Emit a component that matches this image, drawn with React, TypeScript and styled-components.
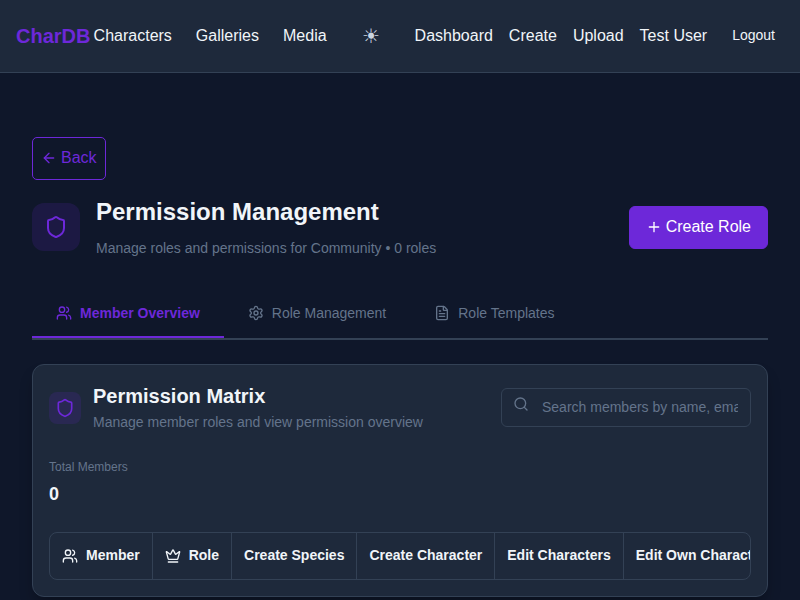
import React from "react";
import styled, { createGlobalStyle, css } from "styled-components";
import { ArrowLeft, Crown, FileText, Plus, Search, Settings, Shield, Users } from "lucide-react";

const color = {
  background: "#0f172a",
  surface: "#1e293b",
  border: "#334155",
  text: "#f1f5f9",
  secondary: "#cbd5e1",
  muted: "#64748b",
  primary: "#6d28d9",
};

const GlobalStyle = createGlobalStyle`
  * { box-sizing: border-box; margin: 0; padding: 0; }
  html, body { height: 600px; overflow: hidden; }
  body {
    background: ${color.background};
    color: ${color.text};
    font-family: "Liberation Sans", Arial, sans-serif;
    font-size: 16px;
    line-height: 1.6;
  }
  button, input { font-family: inherit; }
  svg { flex-shrink: 0; }
`;

const Header = styled.header`
  height: 73px;
  padding: 0 16px;
  display: flex;
  align-items: center;
  justify-content: space-between;
  background: ${color.surface};
  border-bottom: 1px solid ${color.border};
`;

const Logo = styled.a`
  color: ${color.primary};
  font-size: 20px;
  font-weight: 700;
`;

const Nav = styled.nav`
  display: flex;
  align-items: center;
  gap: 24px;
  white-space: nowrap;
`;

const UserNav = styled.div`
  display: flex;
  align-items: center;
  gap: 16px;
`;

const NavLink = styled.a`
  color: ${color.text};
`;

const ThemeToggle = styled.button`
  width: 40px;
  height: 40px;
  border: 0;
  background: none;
  color: ${color.secondary};
  font-size: 20px;
`;

const LogoutButton = styled.button`
  padding: 7px 8px 9px;
  border: 1px solid transparent;
  background: none;
  color: ${color.text};
  font-size: 14px;
`;

const Page = styled.main`
  padding: 64px 32px 0;
`;

const Button = styled.button<{ $filled?: boolean }>`
  display: inline-flex;
  align-items: center;
  justify-content: center;
  gap: 4px;
  height: 43px;
  padding: ${(p) => (p.$filled ? "0 16px" : "0 8px 1px")};
  border: 1px solid ${color.primary};
  border-radius: ${(p) => (p.$filled ? 6 : 5)}px;
  background: ${(p) => (p.$filled ? color.primary : "transparent")};
  color: ${(p) => (p.$filled ? "#fff" : color.primary)};
  font-size: 16px;
  line-height: 24px;
  white-space: nowrap;
`;

const BackRow = styled.div`
  display: flex;
  height: 43px;
`;

const TitleRow = styled.div`
  display: flex;
  align-items: center;
  justify-content: space-between;
  margin-top: 12px;
  height: 70px;
`;

const TitleGroup = styled.div<{ $gap: number }>`
  display: flex;
  align-items: center;
  gap: ${(p) => p.$gap}px;
`;

const TitleText = styled.div<{ $bottom: number }>`
  padding-bottom: ${(p) => p.$bottom}px;
`;

const IconBadge = styled.div<{ $size: number; $radius: number }>`
  width: ${(p) => p.$size}px;
  height: ${(p) => p.$size}px;
  display: flex;
  align-items: center;
  justify-content: center;
  border-radius: ${(p) => p.$radius}px;
  background: rgba(109, 40, 217, 0.15);
  color: ${color.primary};
`;

const PageTitle = styled.h1`
  font-size: 24px;
  line-height: 38px;
  margin-bottom: 6px;
`;

const Subtitle = styled.p`
  color: ${color.muted};
  font-size: 14px;
  line-height: 22px;
`;

const Tabs = styled.div`
  display: flex;
  margin-top: 26px;
  height: 52px;
  border-bottom: 2px solid ${color.border};
`;

const Tab = styled.button<{ $active?: boolean }>`
  display: flex;
  align-items: center;
  gap: 8px;
  height: 50px;
  padding: 2px 24px 0;
  border: 0;
  border-bottom: 2px solid transparent;
  background: none;
  color: ${color.muted};
  font-size: 14px;
  ${(p) =>
    p.$active &&
    css`
      color: ${color.primary};
      border-bottom-color: ${color.primary};
      font-weight: 700;
    `}
`;

const Card = styled.section`
  margin-top: 24px;
  height: 233px;
  padding: 16px;
  border: 1px solid ${color.border};
  border-radius: 12px;
  background: ${color.surface};
  box-shadow: 0 10px 15px -3px rgba(0, 0, 0, 0.3);
`;

const CardHeader = styled.div`
  display: flex;
  align-items: center;
  justify-content: space-between;
  height: 54px;
`;

const CardTitle = styled.h2`
  font-size: 20px;
  line-height: 32px;
  margin-bottom: -1px;
`;

const SearchBox = styled.label`
  display: flex;
  width: 250px;
  height: 39px;
  margin-bottom: 1px;
  padding: 0 12px 0 11px;
  gap: 13px;
  border: 1px solid ${color.border};
  border-radius: 6px;
  color: ${color.muted};

  svg { margin-top: 7px; }
`;

const SearchInput = styled.input`
  flex: 1;
  min-width: 0;
  padding-bottom: 2px;
  border: 0;
  outline: 0;
  background: none;
  color: ${color.text};
  font-size: 14px;
  &::placeholder { color: ${color.muted}; opacity: 1; }
`;

const Stat = styled.div`
  margin-top: 22px;
`;

const StatLabel = styled.div`
  color: ${color.muted};
  font-size: 12px;
  line-height: 20px;
`;

const StatValue = styled.div`
  margin-top: 3px;
  font-size: 18px;
  font-weight: 700;
  line-height: 29px;
`;

const Matrix = styled.div`
  display: flex;
  margin-top: 23px;
  height: 48px;
  overflow: hidden;
  border: 1px solid ${color.border};
  border-radius: 8px;
`;

const HeadCell = styled.div`
  display: flex;
  align-items: center;
  flex-shrink: 0;
  gap: 8px;
  padding: 0 12px;
  border-right: 1px solid ${color.border};
  font-size: 14px;
  font-weight: 700;
  white-space: nowrap;
`;

const HeadLabel = styled.span`
  padding-bottom: 2px;
`;

const columns = [
  { name: "Member", Icon: Users },
  { name: "Role", Icon: Crown },
  { name: "Create Species" },
  { name: "Create Character" },
  { name: "Edit Characters" },
  { name: "Edit Own Characters" },
];

export default function App() {
  return (
    <>
      <GlobalStyle />
      <Header>
        <Logo>CharDB</Logo>
        <Nav>
          <NavLink>Characters</NavLink>
          <NavLink>Galleries</NavLink>
          <NavLink>Media</NavLink>
          <ThemeToggle>☀</ThemeToggle>
          <UserNav>
            <NavLink>Dashboard</NavLink>
            <NavLink>Create</NavLink>
            <NavLink>Upload</NavLink>
            <NavLink>Test User</NavLink>
            <LogoutButton>Logout</LogoutButton>
          </UserNav>
        </Nav>
      </Header>
      <Page>
        <BackRow>
          <Button><ArrowLeft size={16} />Back</Button>
        </BackRow>
        <TitleRow>
          <TitleGroup $gap={16}>
            <IconBadge $size={48} $radius={12}><Shield size={24} /></IconBadge>
            <TitleText $bottom={2}>
              <PageTitle>Permission Management</PageTitle>
              <Subtitle>Manage roles and permissions for Community • 0 roles</Subtitle>
            </TitleText>
          </TitleGroup>
          <Button $filled><Plus size={16} />Create Role</Button>
        </TitleRow>
        <Tabs>
          <Tab $active><Users size={16} />Member Overview</Tab>
          <Tab><Settings size={16} />Role Management</Tab>
          <Tab><FileText size={16} />Role Templates</Tab>
        </Tabs>
        <Card>
          <CardHeader>
            <TitleGroup $gap={12}>
              <IconBadge $size={32} $radius={8}><Shield size={20} /></IconBadge>
              <TitleText $bottom={3}>
                <CardTitle>Permission Matrix</CardTitle>
                <Subtitle>Manage member roles and view permission overview</Subtitle>
              </TitleText>
            </TitleGroup>
            <SearchBox>
              <Search size={16} />
              <SearchInput placeholder="Search members by name, email, or role..." />
            </SearchBox>
          </CardHeader>
          <Stat>
            <StatLabel>Total Members</StatLabel>
            <StatValue>0</StatValue>
          </Stat>
          <Matrix>
            {columns.map(({ name, Icon }) => (
              <HeadCell key={name}>
                {Icon && <Icon size={16} />}
                <HeadLabel>{name}</HeadLabel>
              </HeadCell>
            ))}
          </Matrix>
        </Card>
      </Page>
    </>
  );
}
